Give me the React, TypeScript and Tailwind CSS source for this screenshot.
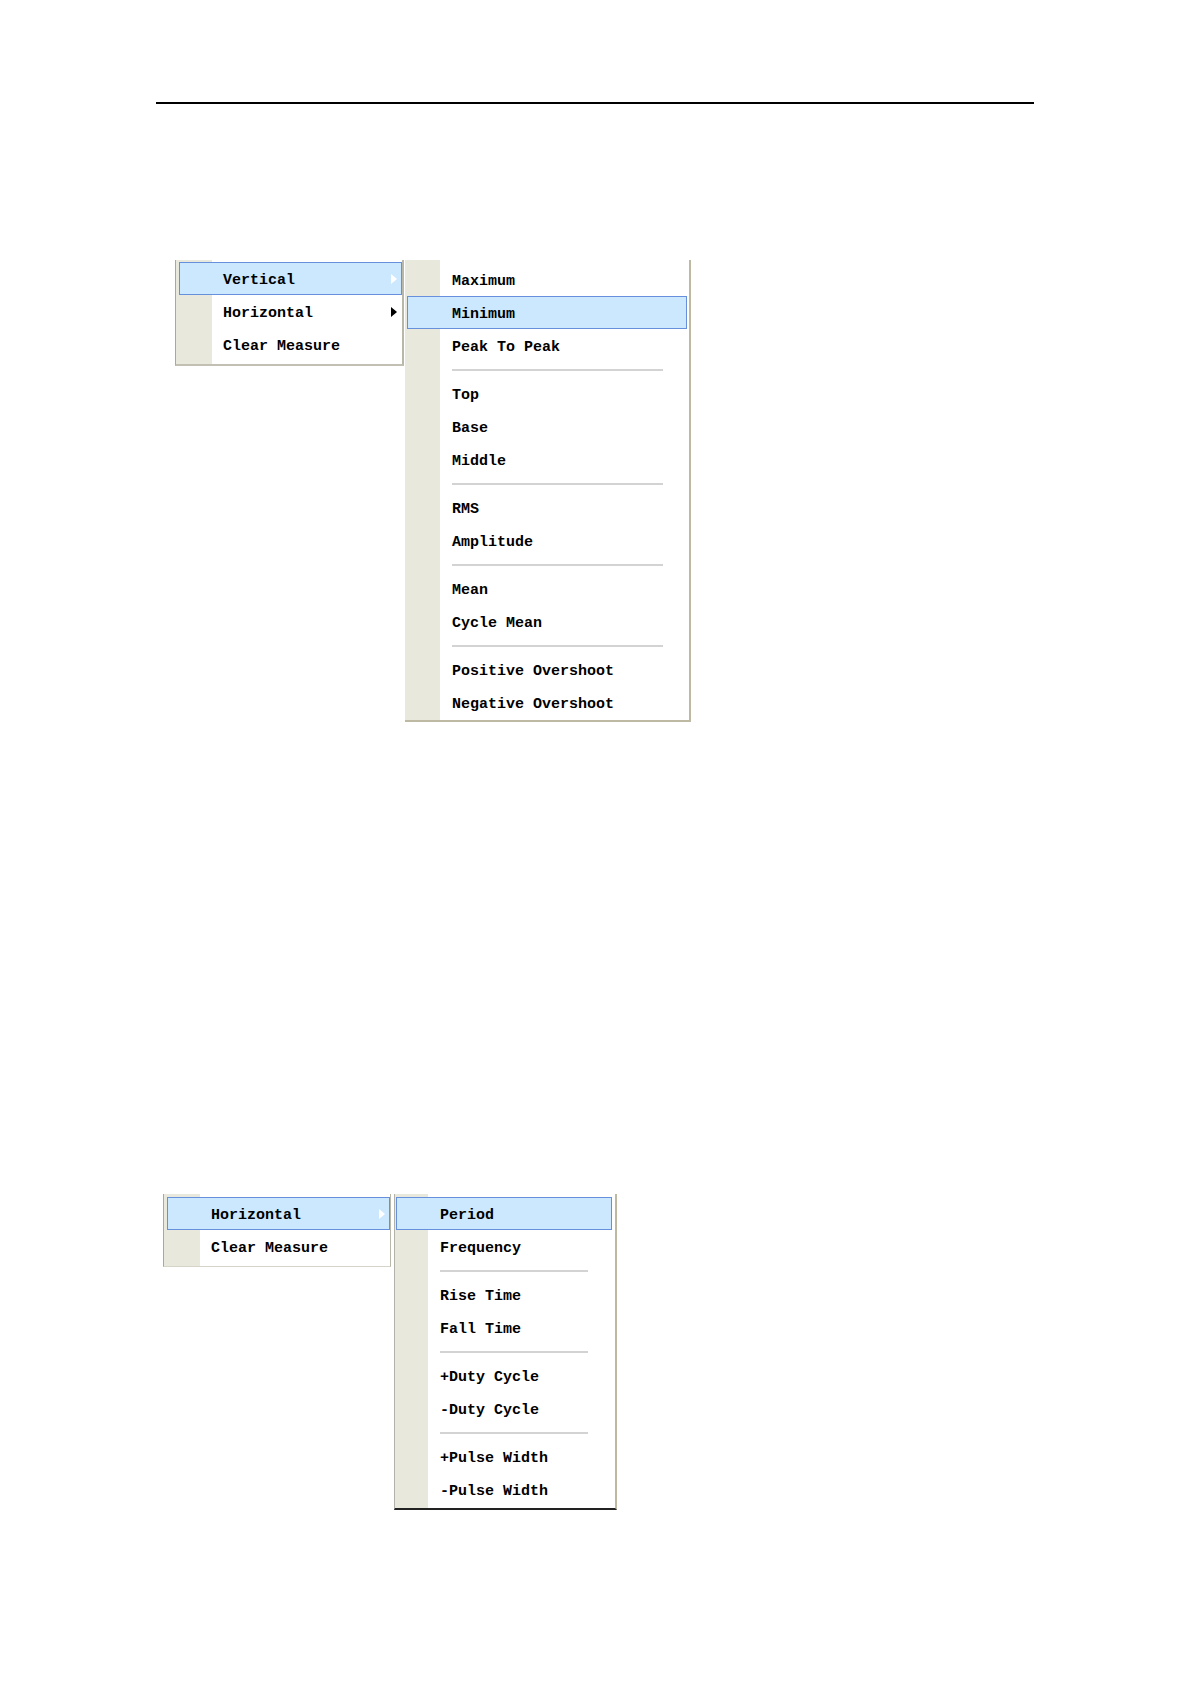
import React from "react";

type Item = { label: string; arrow?: boolean } | "sep";

interface MenuProps {
  items: Item[];
  active: number;
  className: string;
  gutterBg: string;
  rowClass: string;
  sepClass: string;
}

const FONT = "font-['Liberation_Mono','DejaVu_Sans_Mono',monospace] font-bold text-[15px] text-black";

function Arrow({ white }: { white: boolean }) {
  return (
    <svg width="6" height="10" viewBox="0 0 6 10" className="shrink-0">
      <path d="M0 0 L6 5 L0 10 Z" fill={white ? "#ffffff" : "#000000"} />
    </svg>
  );
}

function Menu({ items, active, className, gutterBg, rowClass, sepClass }: MenuProps) {
  return (
    <div className={`${className} ${gutterBg} ${FONT}`}>
      {items.map((item, i) => {
        if (item === "sep") {
          return (
            <div key={`sep-${i}`} className="h-[15px] flex items-center">
              <div className={sepClass} />
            </div>
          );
        }
        const on = i === active;
        return (
          <div
            key={item.label}
            className={`h-[33px] flex items-center justify-between border ${rowClass} ${
              on ? "bg-[#cce8ff] border-[#6690dc]" : "border-transparent"
            }`}
          >
            <span className="whitespace-pre leading-none pt-[3px]">{item.label}</span>
            {item.arrow && (
              <span className="pr-[4px]">
                <Arrow white={on} />
              </span>
            )}
          </div>
        );
      })}
    </div>
  );
}

const verticalSub: Item[] = [
  { label: "Maximum" },
  { label: "Minimum" },
  { label: "Peak To Peak" },
  "sep",
  { label: "Top" },
  { label: "Base" },
  { label: "Middle" },
  "sep",
  { label: "RMS" },
  { label: "Amplitude" },
  "sep",
  { label: "Mean" },
  { label: "Cycle Mean" },
  "sep",
  { label: "Positive Overshoot" },
  { label: "Negative Overshoot" },
];

const horizontalSub: Item[] = [
  { label: "Period" },
  { label: "Frequency" },
  "sep",
  { label: "Rise Time" },
  { label: "Fall Time" },
  "sep",
  { label: "+Duty Cycle" },
  { label: "-Duty Cycle" },
  "sep",
  { label: "+Pulse Width" },
  { label: "-Pulse Width" },
];

export default function App() {
  return (
    <div className="w-[1191px] min-h-[1685px] bg-white">
      {/* page header rule */}
      <div className="pt-[102px] pl-[156px]">
        <div className="h-[2px] w-[878px] bg-black" />
      </div>

      {/* vertical measure menu */}
      <div className="mt-[156px] flex items-start pl-[175px]">
        <Menu
          className="w-[229px] pt-[2px] pb-[3px] border-l border-r-2 border-b-2 border-l-[#a9a89c] border-r-[#b9b7a8] border-b-[#c2c0b2]"
          gutterBg="bg-[linear-gradient(to_right,#e9e8dc_36px,#ffffff_36px)]"
          rowClass="ml-[3px] pl-[43px]"
          sepClass=""
          active={0}
          items={[
            { label: "Vertical", arrow: true },
            { label: "Horizontal", arrow: true },
            { label: "Clear Measure" },
          ]}
        />
        <Menu
          className="ml-px w-[286px] pt-[3px] pb-[1px] border-r-2 border-b-2 border-r-[#bdb9a3] border-b-[#bdb9a3]"
          gutterBg="bg-[linear-gradient(to_right,#e9e8dc_35px,#ffffff_35px)]"
          rowClass="mx-[2px] pl-[44px]"
          sepClass="ml-[47px] w-[211px] h-[2px] bg-[#d3d3d3]"
          active={1}
          items={verticalSub}
        />
      </div>

      {/* horizontal measure menu */}
      <div className="mt-[472px] flex items-start pl-[163px]">
        <Menu
          className="w-[228px] pt-[3px] pb-[3px] border-l border-r border-b border-l-[#a9a89c] border-r-[#b9b7a8] border-b-[#d6d4c8]"
          gutterBg="bg-[linear-gradient(to_right,#e9e8dc_36px,#ffffff_36px)]"
          rowClass="ml-[3px] pl-[43px]"
          sepClass=""
          active={0}
          items={[{ label: "Horizontal", arrow: true }, { label: "Clear Measure" }]}
        />
        <Menu
          className="ml-[3px] w-[223px] pt-[3px] pb-[2px] border-l border-r-2 border-b-2 border-l-[#b3b2a8] border-r-[#bdb9a3] border-b-[#222222]"
          gutterBg="bg-[linear-gradient(to_right,#e9e8dc_33px,#ffffff_33px)]"
          rowClass="mx-[1px] mr-[3px] pl-[43px]"
          sepClass="ml-[45px] w-[148px] h-[2px] bg-[#d3d3d3]"
          active={0}
          items={horizontalSub}
        />
      </div>
    </div>
  );
}
